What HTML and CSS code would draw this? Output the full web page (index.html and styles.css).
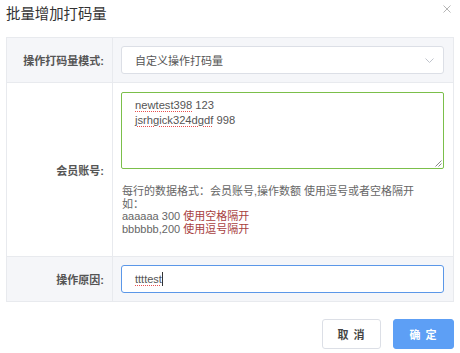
FILE: index.html
```html
<!DOCTYPE html>
<html lang="zh-cn">
<head>
  <meta charset="UTF-8">
  <meta name="viewport" content="width=device-width, initial-scale=1.0">
  <title>批量增加打码量</title>
  <link rel="stylesheet" href="styles.css">
</head>
<body>
  <div class="dialog">
    <div class="dialog-header">
      <span class="dialog-title">批量增加打码量</span>
      <svg class="dialog-close" width="8" height="8" viewBox="0 0 8 8"><path d="M0.5 0.5L7.5 7.5M7.5 0.5L0.5 7.5" stroke="#b5b5b5" stroke-width="1" fill="none"/></svg>
    </div>
    <div class="form-table">
      <div class="form-row gray">
        <div class="form-label">操作打码量模式:</div>
        <div class="form-field">
          <div class="select">
            <span>自定义操作打码量</span>
            <svg width="9" height="5" viewBox="0 0 9 5"><path d="M0.5 0.5L4.5 4.5L8.5 0.5" stroke="#c0c4cc" stroke-width="1" fill="none"/></svg>
          </div>
        </div>
      </div>
      <div class="form-row tall">
        <div class="form-label">会员账号:</div>
        <div class="form-field">
          <div class="textarea">
            <div><span class="typo">newtest398</span> 123</div>
            <div><span class="typo">jsrhgick324dgdf</span> 998</div>
            <svg class="grip" width="8" height="8" viewBox="0 0 8 8"><path d="M7.5 1.5L1.5 7.5M7.5 4.5L4.5 7.5" stroke="#888" stroke-width="1" fill="none"/></svg>
          </div>
          <div class="hint">
            <div>每行的数据格式：会员账号,操作数额 使用逗号或者空格隔开</div>
            <div>如：</div>
            <div>aaaaaa 300 <span class="hint-red">使用空格隔开</span></div>
            <div>bbbbbb,200 <span class="hint-red">使用逗号隔开</span></div>
          </div>
        </div>
      </div>
      <div class="form-row gray">
        <div class="form-label">操作原因:</div>
        <div class="form-field">
          <div class="input"><span class="typo">ttttest</span><span class="caret"></span></div>
        </div>
      </div>
    </div>
    <div class="dialog-footer">
      <button class="btn btn-cancel">取 消</button>
      <button class="btn btn-primary">确 定</button>
    </div>
  </div>
</body>
</html>
```

FILE: styles.css
```css
body {
  margin: 0;
  background: #fff;
  font-family: 'Liberation Sans', 'Noto Sans CJK SC', sans-serif;
  font-size: 11px;
  color: #555;
}
.dialog {
  padding: 0 6px;
}
.dialog-header {
  height: 37px;
  display: flex;
  justify-content: space-between;
  align-items: flex-start;
}
.dialog-title {
  font-size: 14.4px;
  line-height: 28px;
  color: #333;
}
.dialog-close {
  margin-top: 5px;
  margin-right: 3px;
}
.form-table {
  border: 1px solid #e8eaee;
}
.form-row {
  display: grid;
  grid-template-columns: 106px 1fr;
  border-bottom: 1px solid #e8eaee;
}
.form-row:last-child {
  border-bottom: none;
}
.form-row.gray {
  background: #f5f6f9;
}
.form-label {
  display: flex;
  align-items: center;
  justify-content: flex-end;
  padding-right: 8px;
  border-right: 1px solid #e8eaee;
  font-weight: bold;
  color: #555;
}
.form-field {
  padding: 8px 9px 8px 8px;
  min-width: 0;
}
.form-row.tall .form-field {
  padding-top: 9px;
  padding-bottom: 21px;
}
.select {
  height: 28px;
  box-sizing: border-box;
  border: 1px solid #dcdfe6;
  border-radius: 3px;
  background: #fff;
  display: flex;
  align-items: center;
  justify-content: space-between;
  padding: 0 9px 0 13px;
  color: #555;
}
.textarea {
  position: relative;
  height: 77px;
  box-sizing: border-box;
  border: 1px solid #7bbf4a;
  border-radius: 2px;
  background: #fff;
  padding: 5px 13px;
  font-size: 11.2px;
  line-height: 14.5px;
  color: #555;
}
.grip {
  position: absolute;
  right: 1px;
  bottom: 1px;
}
.typo {
  text-decoration: underline dotted #e65050;
  text-decoration-thickness: 1px;
  text-underline-offset: 2px;
}
.hint {
  margin-top: 16px;
  padding-left: 1px;
  line-height: 12.5px;
  color: #666;
  white-space: nowrap;
}
.hint-red {
  color: #a8413f;
}
.input {
  height: 28px;
  box-sizing: border-box;
  border: 1px solid #5b97e8;
  border-radius: 3px;
  background: #fff;
  display: flex;
  align-items: center;
  padding: 0 13px;
  color: #555;
}
.caret {
  display: inline-block;
  width: 1px;
  height: 14px;
  background: #333;
}
.dialog-footer {
  display: flex;
  justify-content: flex-end;
  gap: 12px;
  margin-top: 17px;
}
.btn {
  height: 30px;
  border-radius: 3px;
  font-family: 'Liberation Sans', 'Noto Sans CJK SC', sans-serif;
  font-size: 11px;
  font-weight: bold;
  letter-spacing: 1px;
  padding: 0;
  cursor: pointer;
}
.btn-cancel {
  width: 59px;
  background: #fff;
  border: 1px solid #dcdfe6;
  color: #444;
}
.btn-primary {
  width: 61px;
  background: #5d9ff5;
  border: 1px solid #5d9ff5;
  color: #fff;
}
```
